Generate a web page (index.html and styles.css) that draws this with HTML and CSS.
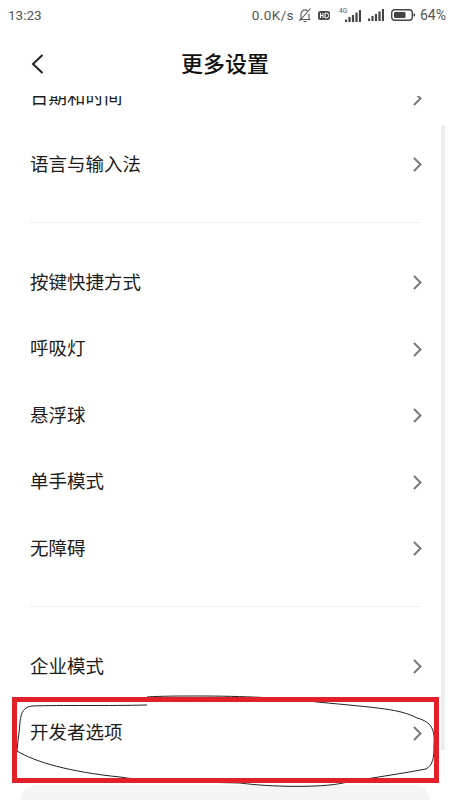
FILE: index.html
```html
<!DOCTYPE html>
<html lang="zh-CN">
<head>
<meta charset="utf-8">
<title>更多设置</title>
<link rel="stylesheet" href="styles.css">
</head>
<body>
<div class="page">
  <div class="status">
    <span class="time">13:23</span>
    <div class="status-right">
      <span class="speed">0.0K/s</span>
      <svg class="i-bell" viewBox="0 0 14 16"><path d="M3 12V7a4 4 0 0 1 6.500-3.200M11 6.500V12M1.500 12.500h11M5.500 14.500h3M1.500 14L12.500 1.500" fill="none" stroke="#555" stroke-width="1.100"/></svg>
      <svg class="i-hd" viewBox="0 0 12 9"><rect width="12" height="9" rx="2.500" fill="#4a4a4a"/><path d="M2.500 2v5M5 2v5M2.500 4.500H5M7 2v5h1.200a2.500 2.500 0 0 0 0-5z" fill="none" stroke="#fff" stroke-width="1"/></svg>
      <div class="net">
        <span class="net-label">4G</span>
        <svg class="i-sig" viewBox="0 0 16 12"><path d="M1 12V9.500M4.500 12V7M8 12V5M11.500 12V2.500M15 12V0" stroke="#444" stroke-width="2.200"/></svg>
      </div>
      <svg class="i-sig i-sig2" viewBox="0 0 16 12"><path d="M1 12V9.500M4.500 12V7M8 12V5M11.500 12V2.500M15 12V0" stroke="#444" stroke-width="2.200"/></svg>
      <svg class="i-bat" viewBox="0 0 24 12"><rect x=".7" y=".7" width="20.600" height="10.600" rx="3" fill="none" stroke="#444" stroke-width="1.400"/><rect x="3" y="3" width="11.500" height="6" rx="1" fill="#444"/><rect x="22.500" y="4.500" width="1.500" height="3" rx=".7" fill="#444"/></svg>
      <span class="pct">64%</span>
    </div>
  </div>

  <header class="head">
    <svg class="back" viewBox="0 0 13 20"><path d="M11.500 1L2 10l9.500 9" fill="none" stroke="#222" stroke-width="2"/></svg>
    <h1 class="title">更多设置</h1>
  </header>

  <main class="list">
    <div class="row row-first"><span>日期和时间</span><svg class="chev" viewBox="0 0 9 15"><path d="M1 1l6.500 6.500L1 14" fill="none" stroke="#7a7a7a" stroke-width="2"/></svg></div>
    <div class="row"><span>语言与输入法</span><svg class="chev" viewBox="0 0 9 15"><path d="M1 1l6.500 6.500L1 14" fill="none" stroke="#7a7a7a" stroke-width="2"/></svg></div>
    <div class="divider"></div>
    <div class="row"><span>按键快捷方式</span><svg class="chev" viewBox="0 0 9 15"><path d="M1 1l6.500 6.500L1 14" fill="none" stroke="#7a7a7a" stroke-width="2"/></svg></div>
    <div class="row"><span>呼吸灯</span><svg class="chev" viewBox="0 0 9 15"><path d="M1 1l6.500 6.500L1 14" fill="none" stroke="#7a7a7a" stroke-width="2"/></svg></div>
    <div class="row"><span>悬浮球</span><svg class="chev" viewBox="0 0 9 15"><path d="M1 1l6.500 6.500L1 14" fill="none" stroke="#7a7a7a" stroke-width="2"/></svg></div>
    <div class="row"><span>单手模式</span><svg class="chev" viewBox="0 0 9 15"><path d="M1 1l6.500 6.500L1 14" fill="none" stroke="#7a7a7a" stroke-width="2"/></svg></div>
    <div class="row"><span>无障碍</span><svg class="chev" viewBox="0 0 9 15"><path d="M1 1l6.500 6.500L1 14" fill="none" stroke="#7a7a7a" stroke-width="2"/></svg></div>
    <div class="divider"></div>
    <div class="row"><span>企业模式</span><svg class="chev" viewBox="0 0 9 15"><path d="M1 1l6.500 6.500L1 14" fill="none" stroke="#7a7a7a" stroke-width="2"/></svg></div>
    <div class="row"><span>开发者选项</span><svg class="chev" viewBox="0 0 9 15"><path d="M1 1l6.500 6.500L1 14" fill="none" stroke="#7a7a7a" stroke-width="2"/></svg></div>
    <div class="card"></div>
  </main>

  <div class="scrollbar"></div>
  <svg class="ink" viewBox="0 0 450 800"><path d="M147 705C110 706 60 705 32 706C24 707 21 712 20 722C19 735 17 748 17 751C35 762 70 772 120 777C150 782 200 782 240 783C270 787 320 788 343 783C370 778 400 774 426 769C433 765 434 758 434 745C435 730 432 722 417 718C400 709 380 708 317 702C290 698 240 696 200 696C180 696 160 696 147 697" fill="none" stroke="#222" stroke-width="1"/></svg>
  <div class="mark"></div>
</div>
</body>
</html>
```
FILE: styles.css
```css
* { box-sizing: border-box; }
html, body { margin: 0; padding: 0; }
body { width: 450px; height: 800px; overflow: hidden; background: #fff; }
.page {
  position: relative;
  width: 450px;
  height: 800px;
  display: flex;
  flex-direction: column;
  overflow: hidden;
  font-family: "Noto Sans CJK SC", "Noto Sans", sans-serif;
  color: #1c1c1c;
  background: #fff;
}
.status {
  height: 30px;
  flex: none;
  display: flex;
  align-items: center;
  justify-content: space-between;
  padding: 0 4px 0 8px;
  font-family: Roboto, "Noto Sans", sans-serif;
  font-size: 13.500px;
  color: #555;
}
.status-right { display: flex; align-items: center; }
.speed { letter-spacing: .4px; }
.i-bell { width: 14px; height: 16px; margin-left: 4px; }
.i-hd { width: 12px; height: 9px; margin-left: 6px; }
.net { display: flex; align-items: flex-end; margin-left: 8px; position: relative; width: 23px; height: 13px; justify-content: flex-end; }
.net-label { position: absolute; left: 1px; top: -2px; font-size: 6.500px; line-height: 8px; }
.i-sig { width: 16px; height: 12px; display: block; }
.i-sig2 { margin-left: 7px; }
.i-bat { width: 24px; height: 12px; margin-left: 7px; }
.pct { margin-left: 5px; font-size: 14px; }
.head {
  height: 66px;
  flex: none;
  display: flex;
  align-items: center;
  justify-content: center;
  position: relative;
  background: #fff;
  z-index: 1;
}
.back { position: absolute; left: 31px; top: 24px; width: 13px; height: 20px; }
.title { margin: 0; font-size: 22px; font-weight: 500; color: #111; line-height: 1; position: relative; top: -1px; }
.list { flex: 1; min-height: 0; display: flex; flex-direction: column; }
.row {
  height: 66.500px;
  flex: none;
  display: flex;
  align-items: center;
  justify-content: space-between;
  padding: 0 28px 0 30px;
  font-size: 18.500px;
}
.row-first { margin-top: -32px; }
.row span { position: relative; top: -1px; }
.chev { width: 9px; height: 15px; display: block; position: relative; top: 1px; }
.divider { height: 1px; flex: none; margin: 24.500px 30px 26px; background: #eee; }
.card { flex: none; height: 60px; margin: 19px 20px 0; border-radius: 16px; background: #f5f5f5; }
.scrollbar { position: absolute; left: 441px; top: 125px; width: 4px; height: 625px; background: #eee; }
.ink { position: absolute; left: 0; top: 0; width: 450px; height: 800px; pointer-events: none; }
.mark { position: absolute; left: 12px; top: 697px; width: 427px; height: 86px; border: 5px solid #e3202a; }
```
